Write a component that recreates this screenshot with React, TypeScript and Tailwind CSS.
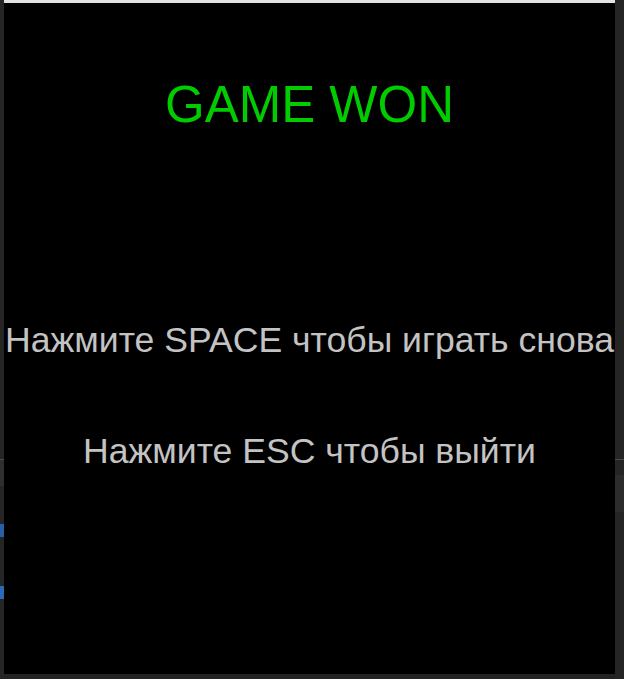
import React from "react";

export default function App() {
  const font = { fontFamily: '"Liberation Sans", Arial, sans-serif' };
  return (
    <div className="flex h-[679px] w-[624px] bg-[#232323] overflow-hidden" style={font}>
      <div className="flex w-[4px] flex-col bg-[#252525]">
        <div className="h-[459px]" />
        <div className="h-[1px] bg-[#4a4a4a]" />
        <div className="h-[26px] bg-[#2f2f2f]" />
        <div className="h-[38px]" />
        <div className="h-[13px] bg-[#2a5fa8]" />
        <div className="h-[49px]" />
        <div className="h-[12px] bg-[#2a6ab8]" />
        <div className="h-[1px] bg-[#2a6ab8]" />
      </div>
      <div className="flex h-[674px] w-[611px] flex-col bg-black">
        <div className="h-[3px] bg-[#e3e3e3]" />
        <div className="flex flex-col items-center pt-[76px]">
          <div className="text-[51px] leading-[51px] text-[#00cc00] whitespace-nowrap">GAME WON</div>
          <div className="mt-[192px] text-[35.6px] leading-[36px] text-[#c3c3c3] whitespace-nowrap">
            Нажмите SPACE чтобы играть снова
          </div>
          <div className="mt-[75px] text-[35.6px] leading-[36px] text-[#c3c3c3] whitespace-nowrap">
            Нажмите ESC чтобы выйти
          </div>
        </div>
      </div>
      <div className="flex w-[9px] flex-col bg-[#252525]">
        <div className="h-[459px]" />
        <div className="h-[1px] bg-[#4a4a4a]" />
        <div className="h-[15px]" />
        <div className="h-[37px] bg-[#2c2c2c]" />
      </div>
    </div>
  );
}
